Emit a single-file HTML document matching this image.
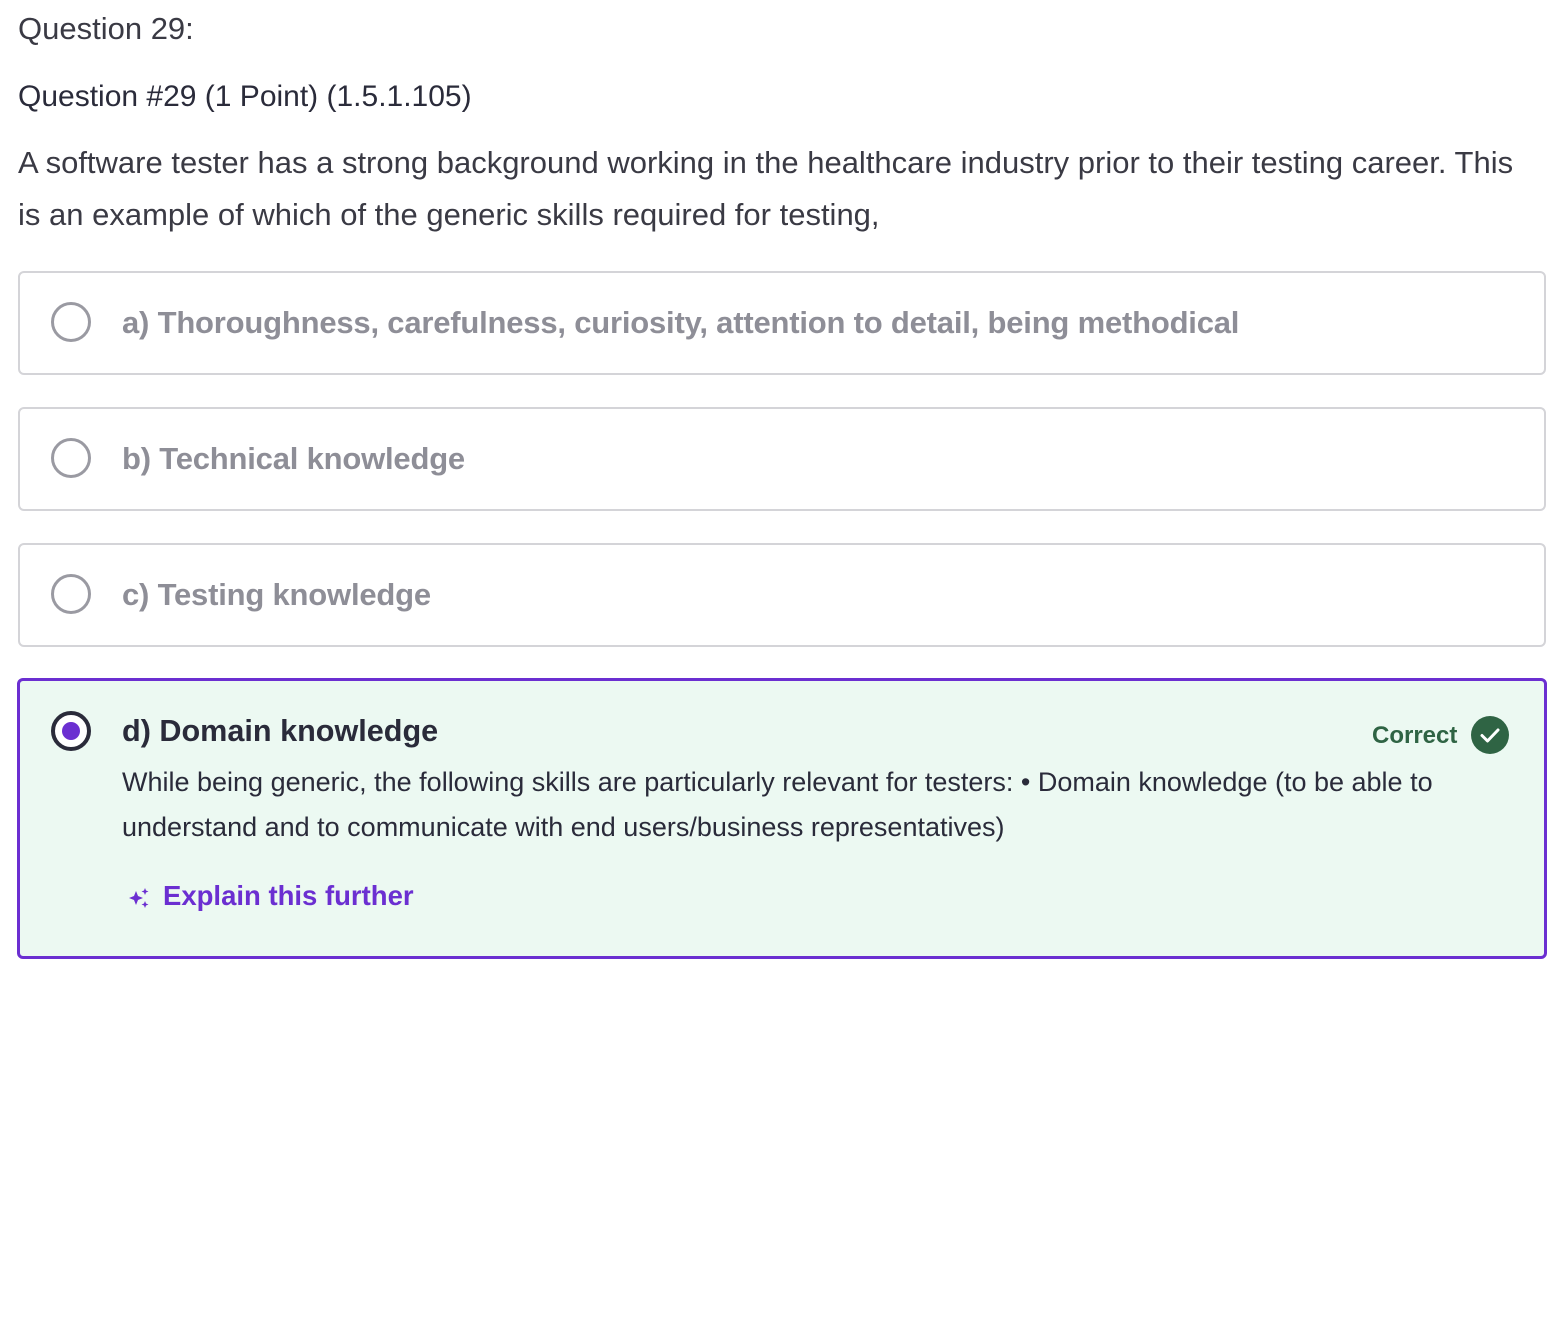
<!DOCTYPE html>
<html><head><style>
body{margin:0;background:#fff;font-family:"Liberation Sans",sans-serif;color:#2a2b3a;width:1566px;height:1336px;position:relative;overflow:hidden}
.abs{position:absolute;white-space:nowrap}
.box{position:absolute;left:18px;width:1524px;height:100px;border:2px solid #d4d4d8;border-radius:6px;box-sizing:content-box}
.radio{position:absolute;left:31px;top:29px;width:34px;height:34px;border:3px solid #9a9aa2;border-radius:50%}
.lbl{position:absolute;left:102px;top:32px;font-size:31px;font-weight:bold;color:#8e8e97;white-space:nowrap;letter-spacing:-0.2px}
</style></head><body>
<div class="abs" style="left:18px;top:11px;font-size:31px;color:#3a3a44">Question 29:</div>
<div class="abs" style="left:18px;top:80px;font-size:30px;color:#2a2b3a">Question #29 (1 Point) (1.5.1.105)</div>
<div class="abs" style="left:18px;top:137px;font-size:31px;line-height:52px;color:#3a3a44;white-space:normal;width:1518px">A software tester has a strong background working in the healthcare industry prior to their testing career. This is an example of which of the generic skills required for testing,</div>

<div class="box" style="top:271px"><div class="radio"></div><div class="lbl">a) Thoroughness, carefulness, curiosity, attention to detail, being methodical</div></div>
<div class="box" style="top:407px"><div class="radio"></div><div class="lbl">b) Technical knowledge</div></div>
<div class="box" style="top:543px"><div class="radio"></div><div class="lbl">c) Testing knowledge</div></div>

<div style="position:absolute;left:17px;top:678px;width:1524px;height:275px;border:3px solid #6b2fd1;border-radius:6px;background:#ecf9f2">
 <div style="position:absolute;left:31px;top:30px;width:32px;height:32px;border:4px solid #2a2b3a;border-radius:50%;background:#fff"><div style="position:absolute;left:7px;top:7px;width:18px;height:18px;border-radius:50%;background:#6b2fd1"></div></div>
 <div class="abs" style="left:102px;top:33px;font-size:30.6px;font-weight:bold;color:#2a2b3a">d) Domain knowledge</div>
 <div class="abs" style="left:1352px;top:41px;font-size:24px;font-weight:bold;color:#2f6444">Correct</div>
 <div style="position:absolute;left:1451px;top:35px;width:38px;height:38px;border-radius:50%;background:#2f6444">
  <svg width="38" height="38" viewBox="0 0 38 38"><path d="M11 19.5l5.5 5.5L27 14" stroke="#fff" stroke-width="3" fill="none" stroke-linecap="round" stroke-linejoin="round"/></svg>
 </div>
 <div style="position:absolute;left:102px;top:79px;width:1400px;font-size:27px;line-height:45px;color:#2a2b3a">While being generic, the following skills are particularly relevant for testers: • Domain knowledge (to be able to understand and to communicate with end users/business representatives)</div>
 <svg style="position:absolute;left:107px;top:205px" width="24" height="24" viewBox="0 0 24 24" fill="#6b2fd1"><path d="M9 5l2 5 5 2-5 2-2 5-2-5-5-2 5-2z"/><path d="M18 2l1 2.5 2.5 1-2.5 1-1 2.5-1-2.5-2.5-1 2.5-1z"/><path d="M18 15l1 2.5 2.5 1-2.5 1-1 2.5-1-2.5-2.5-1 2.5-1z"/></svg>
 <div class="abs" style="left:143px;top:199px;font-size:27.5px;font-weight:bold;color:#6b2fd1">Explain this further</div>
</div>
</body></html>
